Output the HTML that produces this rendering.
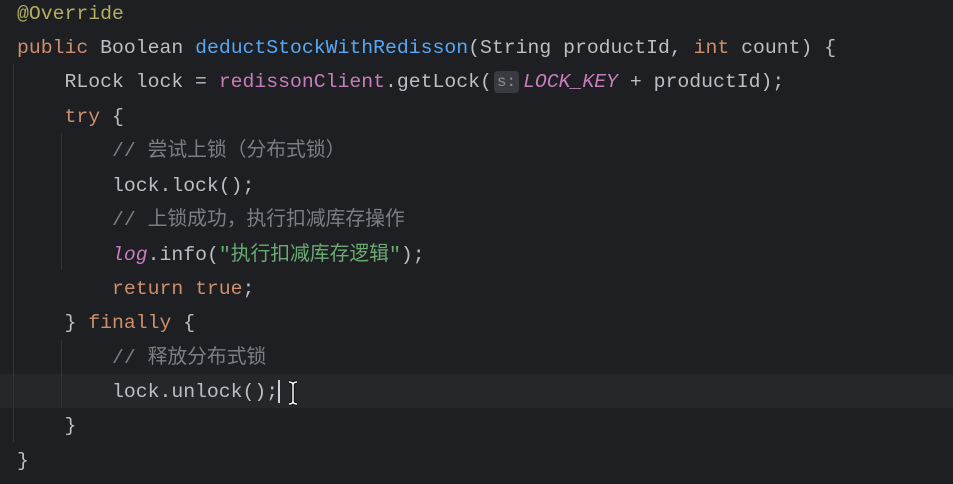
<!DOCTYPE html>
<html><head><meta charset="utf-8"><style>
body{margin:0;width:953px;height:484px;background:#1e1f22;overflow:hidden;position:relative;font-family:"Liberation Mono","Noto Sans CJK SC",monospace;font-size:19.8px;color:#bcbec4}
.l{position:absolute;left:17px;height:34.45px;line-height:34.45px;white-space:pre}
.k{color:#cf8e6d}.a{color:#b3ae60}.m{color:#56a8f5}.f{color:#c77dbb}.c{color:#7a7e85}.s{color:#6aab73}.i{font-style:italic}
.g{position:absolute;width:1px;background:#313338}
.hint{display:inline-block;background:#393b40;color:#8c8f94;border-radius:4px;font-size:16px;line-height:22px;padding:0 3px;margin:0 4px 0 2px;vertical-align:1px}
</style></head><body>
<div style="position:absolute;left:0;top:374px;width:953px;height:34px;background:#25272b"></div>
<div class="g" style="left:13px;top:64px;height:378px"></div>
<div class="g" style="left:61px;top:133px;height:137px"></div>
<div class="g" style="left:61px;top:340px;height:68px"></div>
<div class="l a" style="top:-3px">@Override</div>
<div class="l" style="top:31px"><span class="k">public</span> Boolean <span class="m">deductStockWithRedisson</span>(String productId, <span class="k">int</span> count) {</div>
<div class="l" style="top:65px">    RLock lock = <span class="f">redissonClient</span>.getLock(<span class="hint">s:</span><span class="f i">LOCK_KEY</span> + productId);</div>
<div class="l" style="top:100px">    <span class="k">try</span> {</div>
<div class="l c" style="top:134px">        // 尝试上锁（分布式锁）</div>
<div class="l" style="top:169px">        lock.lock();</div>
<div class="l c" style="top:203px">        // 上锁成功，执行扣减库存操作</div>
<div class="l" style="top:238px">        <span class="f i">log</span>.info(<span class="s">"执行扣减库存逻辑"</span>);</div>
<div class="l" style="top:272px">        <span class="k">return true</span>;</div>
<div class="l" style="top:306px">    } <span class="k">finally</span> {</div>
<div class="l c" style="top:341px">        // 释放分布式锁</div>
<div class="l" style="top:375px">        lock.unlock();</div>
<div style="position:absolute;left:278px;top:380px;width:2px;height:23px;background:#cfd1d6"></div>
<svg style="position:absolute;left:286px;top:380px" width="14" height="26" viewBox="0 0 14 26"><path d="M3 2 Q7 2 7 5 L7 21 Q7 24 3 24 M11 2 Q7 2 7 5 M7 21 Q7 24 11 24" stroke="#000" stroke-width="3" fill="none"/><path d="M3 2 Q7 2 7 5 L7 21 Q7 24 3 24 M11 2 Q7 2 7 5 M7 21 Q7 24 11 24" stroke="#fff" stroke-width="1.5" fill="none"/></svg>
<div class="l" style="top:409px">    }</div>
<div class="l" style="top:444px">}</div>
</body></html>
